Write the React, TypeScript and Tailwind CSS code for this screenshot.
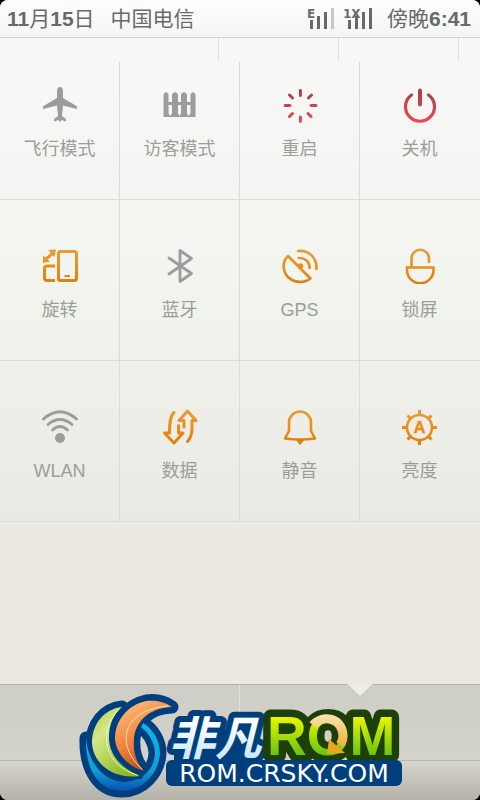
import type { ReactNode } from "react";

const SANS = "font-['Liberation_Sans','Noto_Sans_CJK_SC',sans-serif]";

function Gradients() {
  return (
    <svg className="absolute h-0 w-0" aria-hidden="true">
      <defs>
        <linearGradient id="red" gradientUnits="userSpaceOnUse" x1="0" y1="0" x2="0" y2="36">
          <stop offset="0.1" stopColor="#a8404a" />
          <stop offset="0.9" stopColor="#ec4650" />
        </linearGradient>
        <linearGradient id="orange" gradientUnits="userSpaceOnUse" x1="0" y1="0" x2="0" y2="36">
          <stop offset="0" stopColor="#e2a03a" />
          <stop offset="0.6" stopColor="#ee8a14" />
          <stop offset="1" stopColor="#d87f12" />
        </linearGradient>
      </defs>
    </svg>
  );
}

function Icon({ stroke, children }: { stroke: string; children: ReactNode }) {
  return (
    <svg
      className="size-9"
      viewBox="0 0 36 36"
      fill="none"
      stroke={stroke}
      strokeWidth="2.6"
      strokeLinecap="round"
      strokeLinejoin="round"
      aria-hidden="true"
    >
      {children}
    </svg>
  );
}

const GRAY = "#9c9d9b";

const icons: Record<string, ReactNode> = {
  plane: (
    <Icon stroke="none">
      <path
        fill={GRAY}
        d="M18 0c2 0 3 2 3 4.500v6.500l13.500 8c.6.500.7 2.500.2 3L21 18.500l-1 10.500 4 3v2.500l-4.700-1.500L18 35.500l-1.300-2.500-4.700 1.500V32l4-3-1-10.500L1.300 22c-.5-.5-.4-2.500.2-3L15 11V4.500C15 2 16 0 18 0z"
      />
    </Icon>
  ),
  fence: (
    <Icon stroke="none">
      <path
        fill={GRAY}
        d="M1.500 7.500Q4 2.500 6.500 7.500V15H10V7.500Q13 2.500 16 7.500V15h3V7.500Q22 2.500 25 7.500V15h3.500V7.500Q31 2.500 33.500 7.500V30h-32zM6.500 18v8.500L8.200 29l1.800-2.500V18zM16 18v8.500l1.500 2.500 1.500-2.500V18zM25 18v8.500l1.700 2.500 1.800-2.500V18z"
      />
    </Icon>
  ),
  restart: (
    <Icon stroke="url(#red)">
      <path
        strokeWidth="3"
        d="M18.400 3.500L18.410 8.500M18.400 30L18.410 34.500M3 18.500L8 18.510M29 18.500L34 18.510M7.500 8l3 3M26 26.500l3 3M29.500 8l-3 3M10.500 26.500l-3 3"
      />
    </Icon>
  ),
  power: (
    <Icon stroke="url(#red)">
      <path strokeWidth="3.200" d="M9.500 8A14.500 14.500 0 1 0 26.500 8" />
      <path strokeWidth="4" d="M18 3.500L18.010 17.500" />
    </Icon>
  ),
  rotate: (
    <Icon stroke="url(#orange)">
      <path strokeWidth="3" strokeLinejoin="round" strokeLinecap="butt" d="M13 18H5q-2.500 0-2.500 2.500V30q0 2.500 2.500 2.500h8" />
      <rect x="16.500" y="3.500" width="18" height="29" rx="2" strokeWidth="3" />
      <path strokeWidth="2" strokeLinecap="butt" d="M22.500 28L28 28.010" />
      <path strokeWidth="3" strokeLinecap="butt" d="M4 11l7-6" />
      <path fill="url(#orange)" stroke="none" d="M1 7.500v7.500l7-1.500zM6 2l8-.5L12.500 9z" />
    </Icon>
  ),
  bluetooth: (
    <Icon stroke={GRAY}>
      <path d="M7 10L29.500 25.500 18 33.500V2.500l11.500 8L7 26" strokeWidth="2.800" />
    </Icon>
  ),
  gps: (
    <Icon stroke="url(#orange)">
      <path d="M6 8L28.500 30.500C22 35.500 12 35 6 29 0 23 .5 13 6 8z" />
      <path d="M16 3C27 2 35 9.500 34.500 21M16.500 10C23 9.500 28 14 27.500 20" />
      <circle cx="18.500" cy="18" r="1.500" fill="url(#orange)" />
    </Icon>
  ),
  lock: (
    <Icon stroke="url(#orange)">
      <path d="M9.500 19V10.500a8.500 8.500 0 0 1 17.500 0V14" />
      <path d="M5 19.500h26.500V22a13.200 13.200 0 0 1-26.500 0z" strokeLinejoin="miter" />
    </Icon>
  ),
  wifi: (
    <Icon stroke={GRAY}>
      <path strokeWidth="2.800" d="M1.500 10q16.500-14.500 33 0M6 15.500q12-10 24 0M10.500 21q7.500-7 15 0" />
      <circle cx="18" cy="29" r="5" fill={GRAY} stroke="none" />
    </Icon>
  ),
  data: (
    <Icon stroke="url(#orange)">
      <path
        strokeWidth="3"
        d="M12 3.500C8 7 7.500 14 7.500 24H2.500l9.500 10L21 24h-4.500v-7.500M25.500 32.500C29.500 28 30 24 30 20v-8.500h4L25.500 2 17 11.500h5V18"
      />
    </Icon>
  ),
  bell: (
    <Icon stroke="url(#orange)">
      <path d="M7 22V13.500a11 11 0 0 1 22 0V22l4 7.500q-15 2-30 0z" />
      <path fill="url(#orange)" stroke="none" d="M14 31h8.500L18 36z" />
    </Icon>
  ),
  brightness: (
    <Icon stroke="url(#orange)">
      <circle cx="17.500" cy="18.500" r="12.500" />
      <path
        strokeLinecap="butt"
        strokeWidth="3"
        d="M17.500 1L17.510 6M17.500 31L17.510 36M0 18.500L5 18.510M30 18.500L35 18.510M5.500 6.500l3 3M26.500 27.500l3 3M29.500 6.500l-3 3M8.500 27.500l-3 3"
      />
      <text
        x="17.500"
        y="24"
        textAnchor="middle"
        className="font-['Liberation_Sans',sans-serif] text-[16px] font-bold"
        fill="url(#orange)"
        strokeWidth="0.500"
      >
        A
      </text>
    </Icon>
  ),
};

const rows = [
  [
    ["plane", "飞行模式"],
    ["fence", "访客模式"],
    ["restart", "重启"],
    ["power", "关机"],
  ],
  [
    ["rotate", "旋转"],
    ["bluetooth", "蓝牙"],
    ["gps", "GPS"],
    ["lock", "锁屏"],
  ],
  [
    ["wifi", "WLAN"],
    ["data", "数据"],
    ["bell", "静音"],
    ["brightness", "亮度"],
  ],
];

function Signal({ label, dim }: { label: string; dim?: boolean }) {
  return (
    <svg className="overflow-visible" width="30" height="24" viewBox="0 0 30 24" role="img" aria-label={`${label} signal`}>
      <text
        x={label.length > 1 ? -2 : 0}
        y="11"
        className="font-['DejaVu_Sans',sans-serif] text-[12px] font-bold"
        fill="#666b6a"
      >
        {label}
      </text>
      <g fill="#666b6a">
        <rect x="3" y="13" width="3" height="9" />
        <rect x="10" y="9" width="3" height="13" />
        <rect x="17" y="5" width="3" height="17" />
        <rect x="24" y="1" width="3" height="21" fill={dim ? "#c6c8c5" : "#666b6a"} />
      </g>
    </svg>
  );
}

function StatusBar() {
  return (
    <header className="flex h-[38px] items-center justify-between border-b border-[#d2d4d0] bg-linear-to-b from-[#fdfdfd] to-[#f5f6f2] px-[7px] text-[21px] leading-6 text-[#666b6a]">
      <div className="flex gap-4">
        <span>
          <b>11</b>月<b>15</b>日
        </span>
        <span>中国电信</span>
      </div>
      <div className="flex items-center pr-0.5">
        <div className="flex gap-2 pr-3">
          <Signal label="E" dim />
          <Signal label="1X" />
        </div>
        <span>
          傍晚<b>6:41</b>
        </span>
      </div>
    </header>
  );
}

function Logo() {
  const orange =
    "M172 707C164 701 154 700 146 701C128 705 115 720 115 739C116 753 128 767 144 771C135 761 133 750 134 738C136 722 148 708 172 707Z";
  const green =
    "M122 707C104 709 92 724 92 743C93 764 114 780 140 776C123 769 109 756 109 738C109 724 113 715 122 707Z";
  const ring =
    "M143 723C153 729 160 741 160 753C159 774 142 791 122 791C99 791 85 770 86 738C88 762 104 783 126 782C144 780 155 768 155 752C154 742 149 733 141 727Z";
  return (
    <svg
      className="absolute bottom-0 left-1/2 h-[110px] w-[330px] -translate-x-1/2"
      viewBox="75 690 330 110"
      strokeLinejoin="round"
      strokeLinecap="round"
      role="img"
      aria-label="非凡ROM ROM.CRSKY.COM"
    >
      <defs>
        <linearGradient id="lgOrange" x1="0" y1="0" x2="0.500" y2="1">
          <stop offset="0" stopColor="#ffc98a" />
          <stop offset="0.600" stopColor="#f2803a" />
          <stop offset="1" stopColor="#b84a12" />
        </linearGradient>
        <linearGradient id="lgGreen" x1="0" y1="0" x2="0.700" y2="1">
          <stop offset="0" stopColor="#a6cf3c" />
          <stop offset="0.350" stopColor="#d5e88a" />
          <stop offset="1" stopColor="#8ab81c" />
        </linearGradient>
        <linearGradient id="lgRing" x1="0" y1="0" x2="0" y2="1">
          <stop offset="0" stopColor="#12b4e6" />
          <stop offset="0.700" stopColor="#0f9fd8" />
          <stop offset="1" stopColor="#0b4fb0" />
        </linearGradient>
        <linearGradient id="lgIce" x1="0" y1="0" x2="0" y2="1">
          <stop offset="0.300" stopColor="#ffffff" />
          <stop offset="1" stopColor="#bfe2fa" />
        </linearGradient>
        <linearGradient id="lgLime" gradientUnits="userSpaceOnUse" x1="0" y1="715" x2="0" y2="757">
          <stop offset="0" stopColor="#f0fa00" />
          <stop offset="1" stopColor="#62c010" />
        </linearGradient>
        <linearGradient id="lgArrow" gradientUnits="userSpaceOnUse" x1="0" y1="715" x2="0" y2="754">
          <stop offset="0" stopColor="#fbe2ac" />
          <stop offset="1" stopColor="#eda51c" />
        </linearGradient>
      </defs>

      <g fill="#003f7d" stroke="#003f7d" strokeWidth="13">
        <path d={ring} />
        <path d={green} />
        <path d={orange} />
      </g>
      <path d={ring} fill="url(#lgRing)" />
      <path d={green} fill="#003f7d" stroke="#003f7d" strokeWidth="6" />
      <path d={green} fill="url(#lgGreen)" />
      <path d={orange} fill="#003f7d" stroke="#003f7d" strokeWidth="6" />
      <path d={orange} fill="url(#lgOrange)" />
      <g fill="none" strokeWidth="1">
        <path d="M119 709C96 734 106 766 137 775" stroke="#eef6bd" />
        <path d="M168 706C120 710 116 746 142 769" stroke="#ffe0b8" />
      </g>

      <rect x="174" y="730" width="86" height="34" fill="#003f7d" />
      <text
        x="169"
        y="755"
        className="font-['Noto_Sans_CJK_SC',sans-serif] text-[46px] font-bold italic [paint-order:stroke]"
        fill="url(#lgIce)"
        stroke="#003f7d"
        strokeWidth="12"
      >
        非凡
      </text>
      <text
        x="267"
        y="755"
        className="font-['Liberation_Sans',sans-serif] text-[55px] font-bold [paint-order:stroke]"
        fill="url(#lgLime)"
        stroke="#1d3f08"
        strokeWidth="15"
      >
        ROM
      </text>
      <rect x="166" y="760" width="236" height="26" rx="6" fill="#003f7d" />
      <path d="M313 725C321 715 342 716 343 736Q343 741 340 745" fill="none" stroke="url(#lgArrow)" strokeWidth="9" strokeLinecap="butt" />
      <path d="M329 739L345 753L327 754Z" fill="#eda51c" />
      <text
        x="284"
        y="782"
        textAnchor="middle"
        className="font-['DejaVu_Sans',sans-serif] text-[25px]"
        fill="#fff"
      >
        ROM.CRSKY.COM
      </text>
    </svg>
  );
}

export default function App() {
  return (
    <div className={`min-h-screen bg-black ${SANS}`}>
      <Gradients />
      <div className="relative flex min-h-screen flex-col overflow-hidden rounded-lg bg-[#ece9e2]">
        <StatusBar />
        <main className="flex grow flex-col">
          <div className="bg-linear-to-b from-[#f8f8f8] via-[#f2f4ee] to-[#e9eae3]">
            <div className="flex h-6">
              <div className="w-[219px] border-r border-[#e0e1df]" />
              <div className="w-[120px] border-r border-[#e0e1df]" />
              <div className="w-[120px] border-r border-[#e0e1df]" />
            </div>
            {rows.map((row, r) => (
              <div key={r} className="grid grid-cols-4 border-b border-[#d9dbd6]">
                {row.map(([icon, label]) => (
                  <button
                    key={label}
                    type="button"
                    className={`flex flex-col items-center gap-3.5 border-r border-[#d9dbd7] pb-[38px] last:border-r-transparent ${
                      r === 0 ? "pt-[25px]" : "pt-12"
                    }`}
                  >
                    {icons[icon]}
                    <span className="text-[18px] leading-6 text-[#9c9e9a]">{label}</span>
                  </button>
                ))}
              </div>
            ))}
          </div>
        </main>
        <footer>
          <div className="relative grid h-[76px] grid-cols-2 border-t border-[#b5b0a8] bg-linear-to-b from-[#cecec7] to-[#d2d3cb]">
            <div className="border-r border-[#e2e3dd]" />
            <svg className="absolute -top-px left-3/4 h-3.5 w-7 -translate-x-1/2" viewBox="0 0 28 14" aria-hidden="true">
              <path d="M1 0L14 13L27 0" fill="#eeece6" stroke="#c3c0b9" />
              <path d="M2 0H26" stroke="#ece9e2" strokeWidth="3" />
            </svg>
          </div>
          <div className="h-10 border-t border-[#b9b8b0] bg-linear-to-b from-[#d5d5ce] to-[#b5b2a8]" />
        </footer>
        <Logo />
      </div>
    </div>
  );
}
